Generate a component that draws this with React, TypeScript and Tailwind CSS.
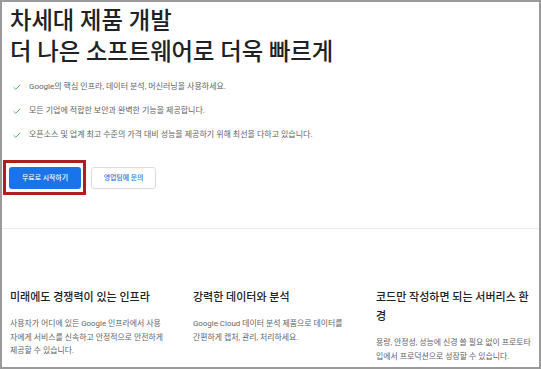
import React from 'react';

const features = [
  'Google의 핵심 인프라, 데이터 분석, 머신러닝을 사용하세요.',
  '모든 기업에 적합한 보안과 완벽한 기능을 제공합니다.',
  '오픈소스 및 업계 최고 수준의 가격 대비 성능을 제공하기 위해 최선을 다하고 있습니다.',
];

const columns = [
  {
    title: '미래에도 경쟁력이 있는 인프라',
    body: '사용자가 어디에 있든 Google 인프라에서 사용자에게 서비스를 신속하고 안정적으로 안전하게 제공할 수 있습니다.',
  },
  {
    title: '강력한 데이터와 분석',
    body: 'Google Cloud 데이터 분석 제품으로 데이터를 간편하게 캡처, 관리, 처리하세요.',
  },
  {
    title: '코드만 작성하면 되는 서버리스 환경',
    body: '용량, 안정성, 성능에 신경 쓸 필요 없이 프로토타입에서 프로덕션으로 성장할 수 있습니다.',
  },
];

const Check: React.FC = () => (
  <svg width="10" height="10" viewBox="0 0 24 24" className="shrink-0">
    <path d="M4 12.5l5 5L20 6.5" fill="none" stroke="#3fae5a" strokeWidth="2.2" />
  </svg>
);

const App: React.FC = () => {
  return (
    <div
      className="w-[541px] h-[369px] border-2 border-[#9a9a9a] bg-white overflow-hidden"
      style={{ fontFamily: 'Roboto, "Noto Sans CJK KR", sans-serif' }}
    >
      {/* Hero */}
      <h1 className="pl-[8px] pt-[4px] text-[23.3px] leading-[31px] font-medium text-[#202124]">
        차세대 제품 개발
        <br />
        더 나은 소프트웨어로 더욱 빠르게
      </h1>

      <ul className="mt-[7px] pl-[10px]">
        {features.map((f) => (
          <li key={f} className="flex items-center h-[24px] gap-[7px] text-[8px] text-[#5f6368]">
            <Check />
            <span>{f}</span>
          </li>
        ))}
      </ul>

      <div className="mt-[20px] pl-[7px] flex gap-[10px]">
        <div className="relative">
          <button className="w-[72px] h-[22px] rounded-[3px] bg-[#1a73e8] text-white text-[6.9px] font-medium flex items-center justify-center">
            무료로 시작하기
          </button>
          <span className="absolute -left-[6px] -top-[7px] -right-[5px] -bottom-[6px] border-[3px] border-[#b01e1e] pointer-events-none" />
        </div>
        <button className="w-[65px] h-[22px] rounded-[3px] border border-[#dadce0] bg-white text-[#1a73e8] text-[6.9px] font-medium flex items-center justify-center">
          영업팀에 문의
        </button>
      </div>

      <div className="mt-[39px] h-px bg-[#ececec]" />

      {/* Feature columns */}
      <div className="grid grid-cols-3 gap-x-[28px] px-[8px] pt-[59px]">
        {columns.map((c) => (
          <div key={c.title}>
            <h3 className="text-[11px] leading-[19px] font-medium text-[#202124]">{c.title}</h3>
            <p className="mt-[10px] text-[7.9px] leading-[13.5px] text-[#5f6368]">{c.body}</p>
          </div>
        ))}
      </div>
    </div>
  );
};

export default App;
